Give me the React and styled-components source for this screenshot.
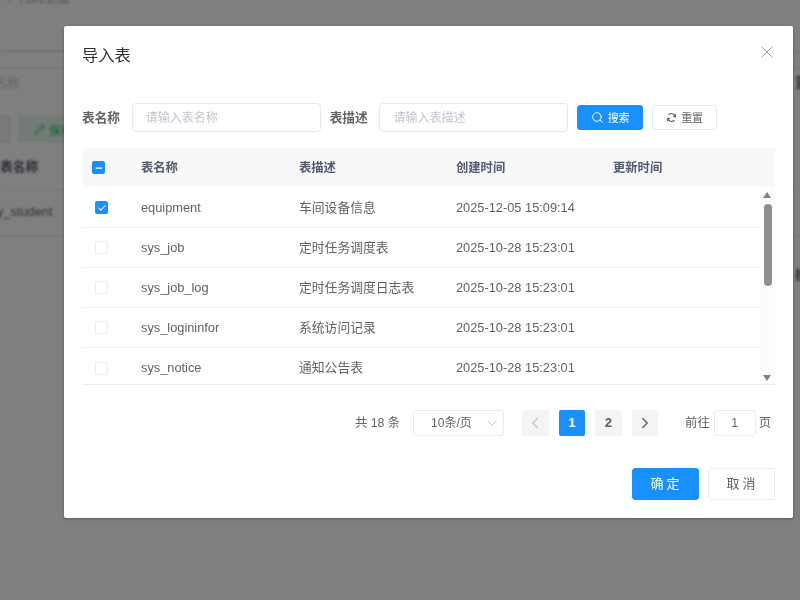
import styled, { createGlobalStyle } from "styled-components";
import { Search, ChevronLeft, ChevronRight, ChevronDown, X, Check, Minus, Pencil } from "lucide-react";

const GlobalStyle = createGlobalStyle`
  html, body { margin: 0; padding: 0; height: 100%; background: #fff; overflow: hidden; }
  body { font-family: "Liberation Sans", "Noto Sans CJK SC", sans-serif; color: #606266; }
  #root { height: 100%; }
`;

const Screen = styled.div`
  position: relative;
  width: 800px;
  height: 600px;
  overflow: hidden;
  filter: blur(0.6px);
`;

const Page = styled.div`
  display: flex;
  flex-direction: column;
  height: 100%;
  filter: blur(0.8px);
  font-size: 12.8px;
`;

const Crumb = styled.div`
  height: 64px;
  flex: none;
  box-sizing: border-box;
  margin-top: -12px;
  padding-left: 7px;
  line-height: 20px;
  color: #97a8be;
  border-bottom: 1px solid #c9ccd4;
  display: flex;
  gap: 7px;
`;

const SearchArea = styled.div`
  height: 49px;
  flex: none;
  margin-top: 15px;
  box-sizing: border-box;
  border-top: 1px solid #e6e6e6;
  padding-top: 7px;
  line-height: 16px;
  display: flex;
  justify-content: space-between;
`;

const SearchHint = styled.span`
  margin-left: -6px;
  color: #c0c4cc;
`;

const EdgeText = styled.span`
  margin-right: -8px;
  font-weight: bold;
  color: #515a6e;
`;

const PageActions = styled.div`
  display: flex;
  gap: 9px;
  height: 26px;
  flex: none;
`;

const GhostBtn = styled.div`
  width: 9px;
  border: 1px solid #dcdfe6;
  border-left: 0;
  background: #f4f4f5;
`;

const GreenBtn = styled.div`
  width: 90px;
  box-sizing: border-box;
  background: #e7f7ee;
  border: 1px solid #d0f0de;
  color: #13ce66;
  font-size: 12px;
  padding-left: 14px;
  display: flex;
  align-items: center;
  gap: 4px;
`;

const PageHead = styled.div`
  margin-top: 12px;
  height: 35px;
  flex: none;
  line-height: 26px;
  font-weight: bold;
  color: #515a6e;
  border-bottom: 1px solid #eee;
`;

const PageRow = styled.div`
  height: 46px;
  flex: none;
  box-sizing: border-box;
  line-height: 44px;
  margin-left: -3px;
  color: #606266;
  border-bottom: 1px solid #eee;
`;

const EdgeNote = styled.div`
  margin-top: 29px;
  line-height: 20px;
  display: flex;
  justify-content: flex-end;
`;

const Overlay = styled.div`
  position: absolute;
  inset: 0;
  background: rgba(0, 0, 0, 0.5);
`;

const Modal = styled.div`
  position: absolute;
  left: 64px;
  top: 26px;
  width: 729px;
  height: 492px;
  box-sizing: border-box;
  padding: 0 18px;
  background: #fff;
  border-radius: 2px;
  box-shadow: 0 1px 3px rgba(0, 0, 0, 0.3);
  display: flex;
  flex-direction: column;
`;

const Head = styled.div`
  height: 77px;
  flex: none;
  display: flex;
  justify-content: space-between;
  padding-top: 17px;
  box-sizing: border-box;
`;

const Title = styled.div`
  font-size: 16.3px;
  line-height: 24px;
  color: #303133;
`;

const CloseBtn = styled.div`
  color: #909399;
  margin-right: -2px;
  margin-top: -1px;
  display: flex;
  height: 20px;
`;

const Filters = styled.div`
  display: flex;
  align-items: center;
  height: 29px;
  flex: none;
`;

const FilterLabel = styled.label`
  font-size: 12.7px;
  font-weight: bold;
  line-height: 20px;
  color: #606266;
  width: 49.7px;
  flex: none;
`;

const TextInput = styled.div`
  width: 189px;
  height: 29px;
  box-sizing: border-box;
  border: 1px solid #e6e8ee;
  border-radius: 4px;
  padding-left: 13px;
  margin-right: 9px;
  font-size: 12px;
  line-height: 28px;
  color: #c0c4cc;
  flex: none;
`;

const SmallBtn = styled.div`
  width: 65.5px;
  height: 25px;
  box-sizing: border-box;
  border-radius: 3px;
  margin-right: 9px;
  display: flex;
  align-items: center;
  justify-content: center;
  gap: 4px;
  font-size: 11px;
  line-height: 16px;
  background: ${(p) => (p.$primary ? "#1890ff" : "#fff")};
  color: ${(p) => (p.$primary ? "#fff" : "#606266")};
  border: 1px solid ${(p) => (p.$primary ? "#1890ff" : "#e8eaee")};
`;

const Table = styled.div`
  margin-top: 16px;
  flex: none;
  border-bottom: 1px solid #e6ebf5;
`;

const Columns = styled.div`
  display: grid;
  grid-template-columns: 59px 158px 157px 157px 1fr;
  align-items: center;
  font-size: 12.8px;
  line-height: 20px;
`;

const HeadRow = styled(Columns)`
  height: 39px;
  margin-bottom: 1px;
  font-size: 12.3px;
  background: #f8f8f9;
  font-weight: bold;
  color: #515a6e;
`;

const TableBody = styled.div`
  display: flex;
  height: 196px;
  overflow: hidden;
`;

const Rows = styled.div`
  flex: 1;
`;

const Row = styled(Columns)`
  height: 40px;
  box-sizing: border-box;
  border-bottom: 1px solid #eff2f6;
  color: #606266;
  &:last-child { border-bottom: 0; }
`;

const Box = styled.span`
  width: 13px;
  height: 13px;
  box-sizing: border-box;
  border-radius: 2px;
  display: flex;
  align-items: center;
  justify-content: center;
  margin-left: ${(p) => (p.$head ? "10px" : "13px")};
  background: ${(p) => (p.$on ? "#1890ff" : "#fff")};
  border: 1px solid ${(p) => (p.$on ? "#1890ff" : "#e9ebef")};
  color: #fff;
`;

const Track = styled.div`
  position: relative;
  width: 15px;
  flex: none;
  background: #fcfcfc;
`;

const Arrow = styled.div`
  position: absolute;
  left: 3px;
  width: 0;
  height: 0;
  border-left: 4.5px solid transparent;
  border-right: 4.5px solid transparent;
  ${(p) =>
    p.$up
      ? "top: 4px; border-bottom: 6px solid #808080;"
      : "bottom: 3px; border-top: 6px solid #808080;"}
`;

const Thumb = styled.div`
  position: absolute;
  left: 3.5px;
  top: 16px;
  width: 8px;
  height: 82px;
  border-radius: 4px;
  background: #8f8f8f;
`;

const Pager = styled.div`
  display: flex;
  justify-content: flex-end;
  align-items: center;
  height: 26px;
  flex: none;
  margin-top: 25px;
  padding-right: 4px;
  font-size: 12.3px;
  line-height: 20px;
  color: #606266;
`;

const Total = styled.span`
  margin-right: 13px;
`;

const PageSize = styled.div`
  width: 91px;
  height: 26px;
  box-sizing: border-box;
  border: 1px solid #e8eaee;
  border-radius: 3px;
  padding: 0 3px 0 17px;
  margin-right: 18px;
  font-size: 12px;
  display: flex;
  align-items: center;
  justify-content: space-between;
  color: #606266;
  svg { color: #c0c4cc; }
`;

const PageBtn = styled.div`
  width: 26.5px;
  height: 26px;
  margin-right: 10px;
  border-radius: 2px;
  display: flex;
  align-items: center;
  justify-content: center;
  font-size: 13px;
  font-weight: bold;
  background: ${(p) => (p.$active ? "#1890ff" : "#f4f4f5")};
  color: ${(p) => (p.$active ? "#fff" : p.$off ? "#c0c4cc" : "#606266")};
`;

const JumpText = styled.span`
  margin-left: ${(p) => p.$gap || 0}px;
`;

const JumpInput = styled.div`
  width: 42px;
  height: 26px;
  margin: 0 3px 0 4px;
  box-sizing: border-box;
  border: 1px solid #e8eaee;
  border-radius: 3px;
  text-align: center;
  line-height: 24px;
`;

const Footer = styled.div`
  display: flex;
  justify-content: flex-end;
  gap: 9px;
  margin-top: 32px;
  flex: none;
`;

const FooterBtn = styled.div`
  width: 67px;
  height: 32px;
  box-sizing: border-box;
  border-radius: 3px;
  padding-left: 2px;
  text-align: center;
  font-size: 13px;
  line-height: 30px;
  letter-spacing: 3px;
  background: ${(p) => (p.$primary ? "#1890ff" : "#fff")};
  color: ${(p) => (p.$primary ? "#fff" : "#606266")};
  border: 1px solid ${(p) => (p.$primary ? "#1890ff" : "#e8eaee")};
`;

const rows = [
  ["equipment", "车间设备信息", "2025-12-05 15:09:14", true],
  ["sys_job", "定时任务调度表", "2025-10-28 15:23:01"],
  ["sys_job_log", "定时任务调度日志表", "2025-10-28 15:23:01"],
  ["sys_logininfor", "系统访问记录", "2025-10-28 15:23:01"],
  ["sys_notice", "通知公告表", "2025-10-28 15:23:01"],
];

function RefreshIcon() {
  return (
    <svg width="11" height="11" viewBox="0 0 24 24" fill="none" stroke="currentColor" strokeWidth="2.4">
      <path d="M20 10a8.5 8.5 0 0 0-14.500-4" />
      <path d="M4 14a8.500 8.500 0 0 0 14.500 4" />
      <path d="M20.500 4v6h-5" />
      <path d="M3.500 20v-6h5" />
    </svg>
  );
}

export default function App() {
  return (
    <Screen>
      <GlobalStyle />
      <Page>
        <Crumb>
          <span>›</span>
          <span>代码生成</span>
        </Crumb>
        <SearchArea>
          <SearchHint>名称</SearchHint>
          <EdgeText>置</EdgeText>
        </SearchArea>
        <PageActions>
          <GhostBtn />
          <GreenBtn>
            <Pencil size={11} />
            保存
          </GreenBtn>
        </PageActions>
        <PageHead>表名称</PageHead>
        <PageRow>y_student</PageRow>
        <EdgeNote>
          <EdgeText>操</EdgeText>
        </EdgeNote>
      </Page>
      <Overlay />
      <Modal>
        <Head>
          <Title>导入表</Title>
          <CloseBtn>
            <X size={20} strokeWidth={1.1} />
          </CloseBtn>
        </Head>
        <Filters>
          <FilterLabel>表名称</FilterLabel>
          <TextInput>请输入表名称</TextInput>
          <FilterLabel>表描述</FilterLabel>
          <TextInput>请输入表描述</TextInput>
          <SmallBtn $primary>
            <Search size={13} strokeWidth={1.8} />
            搜索
          </SmallBtn>
          <SmallBtn>
            <RefreshIcon />
            重置
          </SmallBtn>
        </Filters>
        <Table>
          <HeadRow>
            <Box $on $head>
              <Minus size={10} strokeWidth={3} />
            </Box>
            <span>表名称</span>
            <span>表描述</span>
            <span>创建时间</span>
            <span>更新时间</span>
          </HeadRow>
          <TableBody>
            <Rows>
              {rows.map(([name, desc, created, on]) => (
                <Row key={name}>
                  <Box $on={on}>{on && <Check size={10} strokeWidth={2.5} />}</Box>
                  <span>{name}</span>
                  <span>{desc}</span>
                  <span>{created}</span>
                  <span />
                </Row>
              ))}
            </Rows>
            <Track>
              <Arrow $up />
              <Thumb />
              <Arrow />
            </Track>
          </TableBody>
        </Table>
        <Pager>
          <Total>共 18 条</Total>
          <PageSize>
            10条/页
            <ChevronDown size={16} strokeWidth={1.3} />
          </PageSize>
          <PageBtn $off>
            <ChevronLeft size={18} strokeWidth={1.8} />
          </PageBtn>
          <PageBtn $active>1</PageBtn>
          <PageBtn>2</PageBtn>
          <PageBtn>
            <ChevronRight size={18} strokeWidth={1.8} />
          </PageBtn>
          <JumpText $gap={17}>前往</JumpText>
          <JumpInput>1</JumpInput>
          <JumpText>页</JumpText>
        </Pager>
        <Footer>
          <FooterBtn $primary>确定</FooterBtn>
          <FooterBtn>取消</FooterBtn>
        </Footer>
      </Modal>
    </Screen>
  );
}
